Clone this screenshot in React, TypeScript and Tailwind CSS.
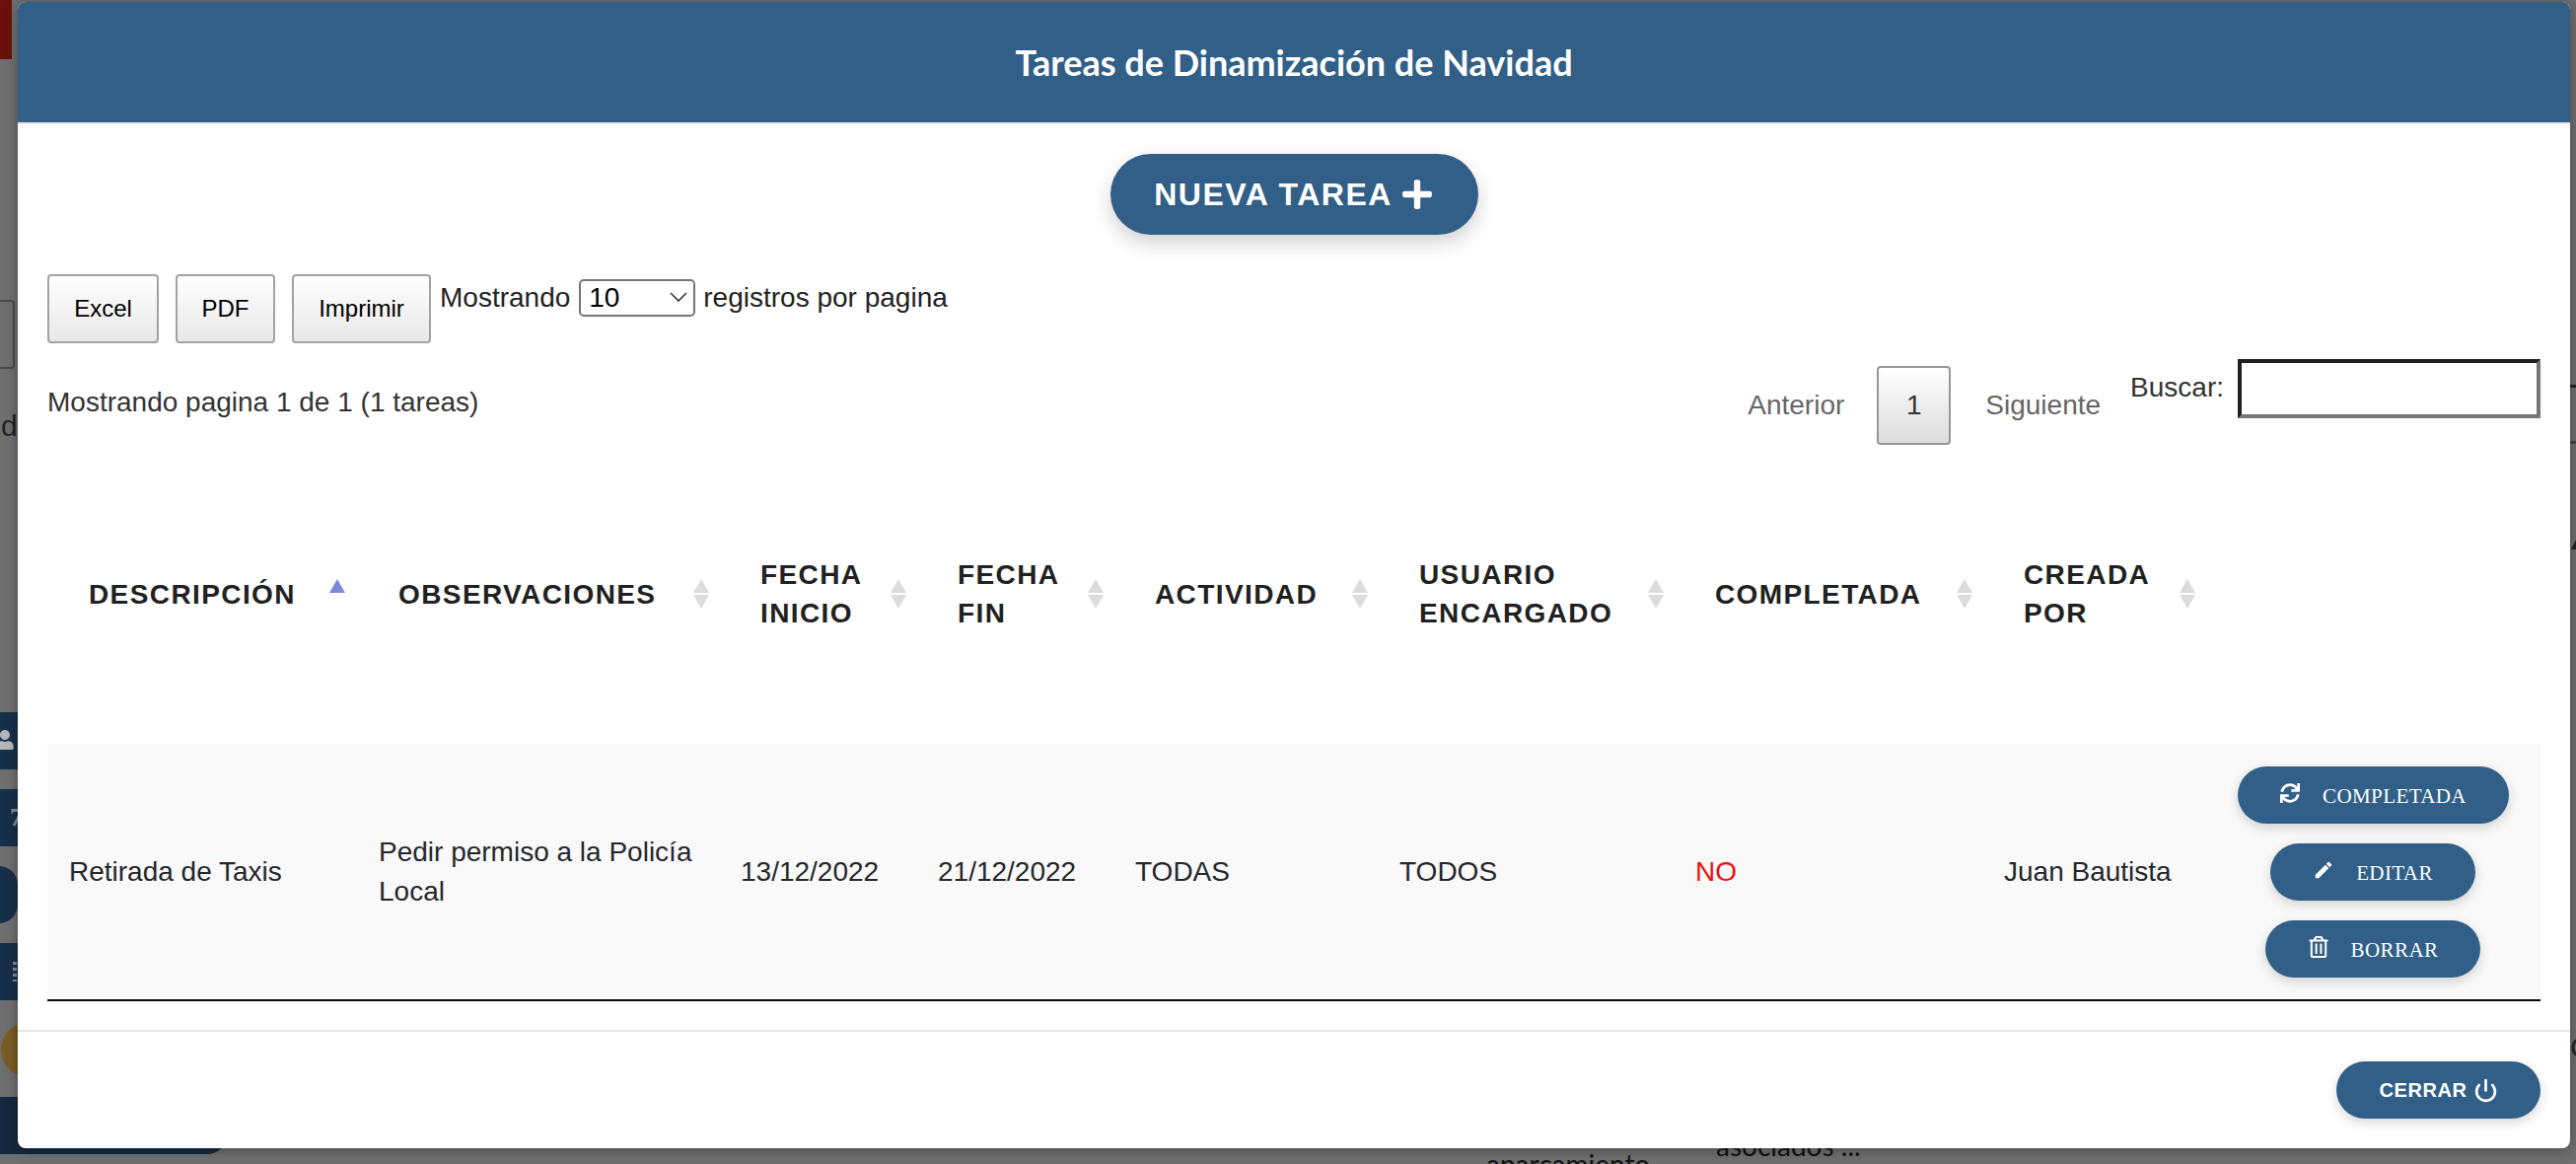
import { FaPlus, FaSync, FaRegTrashAlt, FaUser } from "react-icons/fa";
import { MdEdit } from "react-icons/md";
import { Power } from "lucide-react";

const ARIAL = "font-['Liberation_Sans',Arial,sans-serif]";

function SortArrows({ active }: { active?: boolean }) {
  return (
    <svg className={`absolute top-[calc(50%-10px)] -translate-y-1/2 ${active ? "right-[12px]" : "right-[10px]"}`} width="16" height="30" viewBox="0 0 16 30">
      <path d="M8 0 L16 14 L0 14 Z" fill={active ? "#7d87dc" : "#dcdcdc"} />
      {!active && <path d="M8 30 L16 16 L0 16 Z" fill="#dcdcdc" />}
    </svg>
  );
}

const heads: { lines: string[]; active?: boolean }[] = [
  { lines: ["DESCRIPCIÓN"], active: true },
  { lines: ["OBSERVACIONES"] },
  { lines: ["FECHA", "INICIO"] },
  { lines: ["FECHA", "FIN"] },
  { lines: ["ACTIVIDAD"] },
  { lines: ["USUARIO", "ENCARGADO"] },
  { lines: ["COMPLETADA"] },
  { lines: ["CREADA", "POR"] },
];

function ActionButton({ icon, label, width }: { icon: React.ReactNode; label: string; width: string }) {
  return (
    <button className={`flex h-[58px] ${width} items-center justify-center gap-[22px] rounded-[29px] bg-[#315f87] text-white shadow-[0_4px_12px_rgba(0,0,0,0.16)]`}>
      <span className="flex h-[24px] w-[22px] -translate-y-[2px] items-center justify-center">{icon}</span>
      <span className="translate-y-[2px] font-['Liberation_Serif',serif] text-[21px] leading-none tracking-[0.4px]">{label}</span>
    </button>
  );
}

function ToolButton({ label, width }: { label: string; width: string }) {
  return (
    <button className={`h-[70px] ${width} rounded-[4px] border-2 border-[#a3a3a3] bg-gradient-to-b from-white to-[#e8e8e8] text-[24px] text-black`}>
      {label}
    </button>
  );
}

export default function App() {
  return (
    <div className={`relative h-[1180px] w-[2612px] overflow-hidden bg-[#6f6f6f] ${ARIAL}`}>
      {/* fragments of the page under the dialog */}
      <div className="absolute left-0 top-0 h-[60px] w-[12px] bg-[#6b100c]" />
      <div className="absolute left-[-20px] top-[304px] h-[70px] w-[35px] rounded-[4px] border-2 border-[#4a4a4a]" />
      <span className="absolute left-[1px] top-[412px] text-[30px] leading-[40px] text-[#222]">d</span>
      <div className="absolute left-0 top-[722px] h-[58px] w-[18px] overflow-hidden bg-[#17304a] text-[#b4b8bc]">
        <FaUser size={20} className="absolute left-[-5px] top-[18px]" />
      </div>
      <div className="absolute left-0 top-[800px] h-[58px] w-[18px] overflow-hidden bg-[#17304a]">
        <span className="absolute left-[10px] top-[14px] font-['Liberation_Serif',serif] text-[26px] font-bold leading-[30px] text-[#8a8f95]">7</span>
      </div>
      <div className="absolute left-[-20px] top-[878px] h-[58px] w-[38px] rounded-full bg-[#17304a]" />
      <div className="absolute left-0 top-[956px] h-[58px] w-[18px] bg-[#17304a]">
        <div className="absolute left-[13px] top-[19px] h-[20px] w-[4px] bg-[repeating-linear-gradient(to_bottom,#8a8f95_0,#8a8f95_3px,transparent_3px,transparent_6px)]" />
      </div>
      <div className="absolute left-[1px] top-[1036px] h-[56px] w-[56px] rounded-full bg-[#7a5c24]" />
      <div className="absolute left-0 top-[1112px] h-[58px] w-[230px] rounded-br-[20px] bg-[#14293f]" />
      <div className="absolute left-[2606px] top-[390px] h-[3px] w-[6px] bg-[#222]" />
      <div className="absolute left-[2606px] top-[447px] h-[3px] w-[6px] bg-[#444]" />
      <svg className="absolute left-[2607px] top-[547px]" width="5" height="10" viewBox="0 0 5 10">
        <path d="M5 0 V10 H0 Z" fill="#222" />
      </svg>
      <span className="absolute left-[2606px] top-[1044px] text-[30px] leading-[36px] text-[#222]">C</span>
      <span className="absolute left-[1507px] top-[1160px] font-['Lato',sans-serif] text-[28px] leading-[40px] text-[#111]">aparcamiento</span>
      <span className="absolute left-[1740px] top-[1141px] font-['Lato',sans-serif] text-[28px] leading-[40px] text-[#111]">asociados ...</span>

      {/* dialog */}
      <div className="relative ml-[18px] mt-[2px] flex h-[1162px] w-[2588px] flex-col overflow-hidden rounded-[8px] bg-white shadow-[0_2px_14px_rgba(0,0,0,0.35)]">
        <header className="flex h-[124px] shrink-0 items-center justify-center border-b-2 border-[#e6e8ea] bg-[#315f87]">
          <h1 className="font-['Lato',sans-serif] text-[36px] font-bold text-white">Tareas de Dinamización de Navidad</h1>
        </header>

        <div className="flex flex-1 flex-col px-[30px]">
          <button className="mx-auto mt-[30px] flex h-[82px] w-[373px] items-center justify-center gap-[8px] rounded-[41px] bg-[#315f87] text-[32px] font-bold tracking-[1.5px] text-white shadow-[0_8px_20px_rgba(0,0,0,0.18)]">
            NUEVA TAREA
            <FaPlus size={34} />
          </button>

          <div className="mt-[40px] flex items-start text-[28px] leading-[40px] text-[#222]">
            <ToolButton label="Excel" width="w-[113px]" />
            <div className="ml-[17px]"><ToolButton label="PDF" width="w-[101px]" /></div>
            <div className="ml-[17px]"><ToolButton label="Imprimir" width="w-[141px]" /></div>
            <span className="ml-[9px] mt-[4px]">Mostrando</span>
            <div className="relative ml-[9px] mt-[4px] h-[38px] w-[118px]">
              <select className="h-full w-full appearance-none rounded-[5px] border-2 border-[#767676] bg-white pl-[8px] text-[28px] leading-none text-black" defaultValue="10">
                <option>10</option>
                <option>25</option>
                <option>50</option>
              </select>
              <svg className="pointer-events-none absolute right-[8px] top-[14px]" width="18" height="10" viewBox="0 0 18 10" fill="none" stroke="#333" strokeWidth="1.6">
                <path d="M1 1 L9 9 L17 1" />
              </svg>
            </div>
            <span className="ml-[8px] mt-[4px]">registros por pagina</span>
          </div>

          <div className="mt-[16px] flex items-start justify-between text-[28px] leading-[40px]">
            <span className="mt-[24px] text-[#333]">Mostrando pagina 1 de 1 (1 tareas)</span>
            <div className="flex items-start">
              <span className="mt-[27px] text-[#666]">Anterior</span>
              <button className="ml-[33px] mt-[7px] h-[80px] w-[75px] rounded-[4px] border-2 border-[#979797] bg-gradient-to-b from-white to-[#dcdcdc] text-[#333]">1</button>
              <span className="ml-[35px] mt-[27px] text-[#666]">Siguiente</span>
              <span className="ml-[30px] mt-[9px] text-[#333]">Buscar:</span>
              <input className="ml-[14px] h-[60px] w-[307px] border-4 border-b-[#767676] border-l-[#1f1f1f] border-r-[#767676] border-t-[#1f1f1f] bg-white outline-none" />
            </div>
          </div>

          <table className="mt-[19px] w-[2528px] table-fixed border-collapse">
            <colgroup>
              <col className="w-[314px]" />
              <col className="w-[367px]" />
              <col className="w-[200px]" />
              <col className="w-[200px]" />
              <col className="w-[268px]" />
              <col className="w-[300px]" />
              <col className="w-[313px]" />
              <col className="w-[226px]" />
              <col className="w-[340px]" />
            </colgroup>
            <thead>
              <tr className="h-[284px]">
                {heads.map((h) => (
                  <th key={h.lines.join(" ")} className="relative pb-[20px] pl-[42px] pr-[50px] text-left text-[28px] font-bold leading-[39px] tracking-[1.4px] text-[#212121]">
                    {h.lines.join(" ")}
                    <SortArrows active={h.active} />
                  </th>
                ))}
                <th />
              </tr>
            </thead>
            <tbody>
              <tr className="h-[260px] border-b-2 border-[#0a0a0a] bg-[#f9f9f9] text-[28px] leading-[40px] text-[#25272b]">
                <td className="pl-[22px] pr-[20px]">Retirada de Taxis</td>
                <td className="pl-[22px] pr-[20px]">Pedir permiso a la Policía Local</td>
                <td className="pl-[22px]">13/12/2022</td>
                <td className="pl-[22px]">21/12/2022</td>
                <td className="pl-[22px]">TODAS</td>
                <td className="pl-[22px]">TODOS</td>
                <td className="pl-[22px] text-[#f01010]">NO</td>
                <td className="pl-[22px]">Juan Bautista</td>
                <td>
                  <div className="flex flex-col items-center gap-[20px]">
                    <ActionButton icon={<FaSync size={20} />} label="COMPLETADA" width="w-[275px]" />
                    <ActionButton icon={<MdEdit size={28} />} label="EDITAR" width="w-[208px]" />
                    <ActionButton icon={<FaRegTrashAlt size={22} />} label="BORRAR" width="w-[218px]" />
                  </div>
                </td>
              </tr>
            </tbody>
          </table>
        </div>

        <footer className="flex h-[120px] shrink-0 items-start justify-end border-t-2 border-[#e5e5e5] pr-[30px] pt-[30px]">
          <button className="flex h-[58px] w-[207px] items-center justify-center gap-[6px] rounded-[29px] bg-[#315f87] text-[20px] font-bold tracking-[0.6px] text-white shadow-[0_4px_12px_rgba(0,0,0,0.16)]">
            CERRAR
            <Power size={25} strokeWidth={2.6} />
          </button>
        </footer>
      </div>
    </div>
  );
}
